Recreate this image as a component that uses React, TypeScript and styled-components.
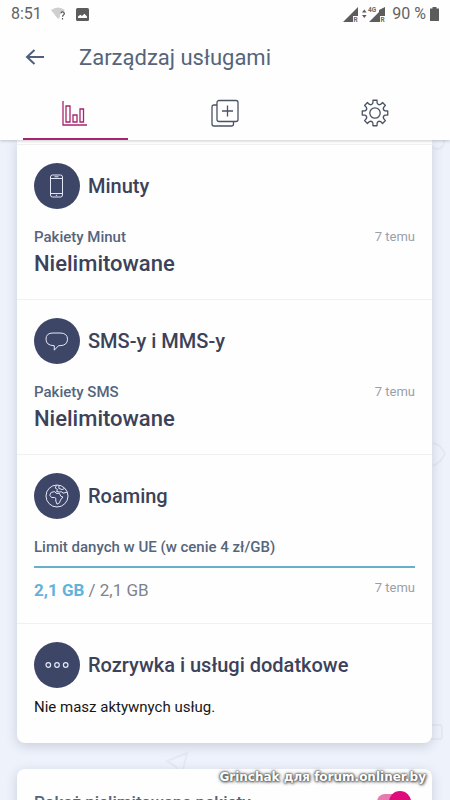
import React from "react";
import styled, { createGlobalStyle } from "styled-components";

const ink = "#3c4259";
const slate = "#55657b";
const magenta = "#a8246f";
const line = "#f0f0f2";

const GlobalStyle = createGlobalStyle`
  * { box-sizing: border-box; }
  body {
    margin: 0;
    font-family: Roboto, "Noto Sans", sans-serif;
    background: #eef2fb;
    color: ${ink};
  }
  button { font: inherit; border: 0; background: none; padding: 0; cursor: pointer; }
  h1, h2, p { margin: 0; }
  svg { display: block; }
`;

const Screen = styled.div`
  position: relative;
  height: 100vh;
  display: flex;
  flex-direction: column;
  overflow: hidden;
`;

const Header = styled.header`
  position: relative;
  z-index: 1;
  flex: none;
  background: #fefefe;
  box-shadow: 0 1px 3px rgba(0, 0, 0, 0.2);
`;

const StatusBar = styled.div`
  display: flex;
  align-items: center;
  justify-content: space-between;
  height: 28px;
  padding: 0 11px;
  font-size: 16px;
  line-height: 28px;
  color: #636363;
`;

const StatusGroup = styled.div<{ $gap: number }>`
  display: flex;
  align-items: center;
  gap: ${({ $gap }) => $gap}px;
`;

const Signals = styled.svg`
  margin-right: 2px;
`;

const AppBar = styled.div`
  display: flex;
  align-items: center;
  gap: 32px;
  height: 60px;
  padding: 0 23px;
`;

const BackButton = styled.button`
  display: grid;
  place-items: center;
  width: 24px;
  height: 24px;
`;

const PageTitle = styled.h1`
  font-size: 22px;
  line-height: 28px;
  font-weight: 400;
  color: ${slate};
`;

const Tabs = styled.nav`
  display: grid;
  grid-template-columns: repeat(3, 1fr);
  height: 52px;
`;

const Tab = styled.button<{ $active?: boolean }>`
  display: flex;
  flex-direction: column;
  align-items: center;
  justify-content: space-between;
  padding-top: 11px;
  color: ${({ $active }) => ($active ? magenta : "#4b5263")};

  &::after {
    content: "";
    width: 70%;
    height: 2px;
    background: ${({ $active }) => ($active ? magenta : "transparent")};
  }
`;

const Content = styled.main`
  position: relative;
  flex: 1;
  min-height: 0;
  overflow: hidden;
  display: flex;
  flex-direction: column;
  gap: 26px;
  padding: 0 18px 0 17px;
`;

const Backdrop = styled.svg`
  position: absolute;
  inset: 0;
  width: 100%;
  height: 100%;
`;

const Card = styled.section<{ $continued?: boolean }>`
  position: relative;
  flex: none;
  background: #fefefe;
  border-radius: ${({ $continued }) => ($continued ? "0 0 8px 8px" : "8px")};
  box-shadow: 0 3px 12px rgba(50, 60, 90, 0.2);
  padding-top: ${({ $continued }) => ($continued ? 4 : 0)}px;
`;

const Service = styled.article`
  padding: 18px 17px 21px;
  border-top: 1px solid ${line};
`;

const ServiceHead = styled.div`
  display: flex;
  align-items: center;
  gap: 8px;
`;

const Badge = styled.span`
  display: grid;
  place-items: center;
  flex: none;
  width: 46px;
  height: 46px;
  border-radius: 50%;
  background: #3e4668;
  color: #e3e8f8;
`;

const ServiceTitle = styled.h2`
  font-size: 20px;
  line-height: 24px;
  font-weight: 500;
  color: ${ink};
`;

const Row = styled.div<{ $top: number }>`
  display: flex;
  align-items: center;
  justify-content: space-between;
  margin-top: ${({ $top }) => $top}px;
`;

const Label = styled.p`
  font-size: 15px;
  line-height: 20px;
  font-weight: 500;
  color: ${slate};
`;

const Age = styled.span`
  font-size: 13px;
  line-height: 20px;
  color: #9aa0ab;
`;

const Value = styled.p`
  margin-top: 3px;
  font-size: 22px;
  line-height: 28px;
  font-weight: 500;
`;

const Meter = styled.div`
  height: 2px;
  margin-top: 9px;
  background: #68aecd;
`;

const Usage = styled.p`
  padding-top: 4px;
  font-size: 17px;
  line-height: 24px;
  color: #7d838e;

  strong { font-weight: 700; color: #62b2da; }
`;

const Note = styled.p`
  margin-top: 9px;
  padding-bottom: 5px;
  font-size: 15px;
  line-height: 20px;
  color: #161616;
`;

const SwitchRow = styled.label`
  display: flex;
  align-items: center;
  justify-content: space-between;
  padding: 23px 17px;
  font-size: 17px;
  line-height: 20px;
  font-weight: 500;
  color: ${slate};
`;

const Switch = styled.input`
  appearance: none;
  position: relative;
  width: 34px;
  height: 16px;
  margin: 0 4px 0 0;
  border-radius: 8px;
  background: #e67bb0;

  &::after {
    content: "";
    position: absolute;
    right: 0;
    top: -3px;
    width: 22px;
    height: 22px;
    border-radius: 50%;
    background: #df0b7b;
  }
`;

const Watermark = styled.div`
  position: absolute;
  z-index: 2;
  right: 24px;
  bottom: 15px;
  font: 700 12px/16px "DejaVu Sans", sans-serif;
  color: #fff;
  text-shadow: 0 0 2px #555, 0 0 2px #555, 1px 1px 3px #666, 0 0 4px #888;
`;

const WifiIcon = () => (
  <svg width="16" height="14" viewBox="0 0 16 14" aria-hidden="true">
    <path d="M0 3Q7 -2 14 3L12 5H9V10L7 12Z" fill="#cfcfcf" />
    <path d="M9.8 6.5Q9.8 4.8 11.5 4.8T13.3 6.4Q13.3 7.4 12.2 8.2Q11.5 8.8 11.5 9.8M11.5 11v1.4" fill="none" stroke="#555" strokeWidth="1.2" />
  </svg>
);

const PictureIcon = () => (
  <svg width="13" height="13" viewBox="0 0 13 13" aria-hidden="true">
    <rect width="13" height="13" rx="1.5" fill="#5c5c5c" />
    <path d="M2 10V8.5L4.3 6.8 6 8 8.4 5.8 11 8.5V10Z" fill="#fff" />
  </svg>
);

const SignalIcons = () => (
  <Signals width="43" height="18" viewBox="0 0 43 18" aria-hidden="true">
    <path d="M0 17 15 2V11H10V17ZM26 17 36 7V5L42 2V11H37V17Z" fill="#5c5c5c" />
    <path d="M19 7.5 21.3 4.5 23.6 7.5ZM19 10 21.3 13 23.6 10Z" fill="#5c5c5c" />
    <text x="10.5" y="17" fontSize="6.5" fontWeight="700" fill="#6a6a6a">R</text>
    <text x="37.5" y="17" fontSize="6.5" fontWeight="700" fill="#6a6a6a">R</text>
    <text x="25" y="7" fontSize="6.5" fontWeight="700" fill="#6a6a6a">4G</text>
  </Signals>
);

const BatteryIcon = () => (
  <svg width="9" height="14" viewBox="0 0 9 14" aria-hidden="true">
    <path d="M2.5 0h4v1.4H9V14H0V1.4h2.5Z" fill="#5c5c5c" />
  </svg>
);

const BackIcon = () => (
  <svg width="20" height="18" viewBox="0 0 20 18" fill="none" stroke="#4d617c" strokeWidth="2" aria-hidden="true">
    <path d="M19 8H2.5M9.5 1 2 8l7.5 7" />
  </svg>
);

const ChartIcon = () => (
  <svg width="26" height="27" viewBox="0 0 26 27" fill="none" stroke="currentColor" strokeWidth="1.3" aria-hidden="true">
    <path d="M1 2V26H25M4 7H8V23H4ZM11 16H15V23H11ZM18 10H21.5V23H18Z" />
  </svg>
);

const AddIcon = () => (
  <svg width="28" height="28" viewBox="0 0 28 28" fill="none" stroke="currentColor" strokeWidth="1.3" aria-hidden="true">
    <rect x="6" y="1.5" width="21" height="21" rx="2" />
    <path d="M6 6H3Q1 6 1 8V25Q1 27 3 27H20.5Q22.5 27 22.5 25V23M16.5 6.5V17.5M11 12H22" />
  </svg>
);

const teeth = Array.from({ length: 8 }, (_, i) => {
  const at = (radius: number, degrees: number) => {
    const angle = ((i * 45 - 90 + degrees) * Math.PI) / 180;
    return `${(14 + radius * Math.cos(angle)).toFixed(2)} ${(14 + radius * Math.sin(angle)).toFixed(2)}`;
  };
  return `${at(10.2, -12)}L${at(12.9, -9)}L${at(12.9, 9)}L${at(10.2, 12)}Q${at(8.2, 22.5)} ${at(10.2, 33)}`;
}).join("L");

const GearIcon = () => (
  <svg width="28" height="28" viewBox="0 0 28 28" fill="none" stroke="currentColor" strokeWidth="1.3" strokeLinejoin="round" aria-hidden="true">
    <path d={`M${teeth}Z`} />
    <circle cx="14" cy="14" r="5.2" />
  </svg>
);

const PhoneIcon = () => (
  <svg width="24" height="24" viewBox="0 0 24 24" fill="none" stroke="currentColor" aria-hidden="true">
    <rect x="5.5" y="1" width="12" height="22" rx="2" />
    <path d="M5.5 4.5H17.5M5.5 19.5H17.5M9.5 2.8H13.5M10.8 21.3H12.2" />
  </svg>
);

const SpeechIcon = () => (
  <svg width="24" height="24" viewBox="0 0 24 24" fill="none" stroke="currentColor" strokeLinejoin="round" aria-hidden="true">
    <path d="M8 4H15Q22.5 4 22.5 10.2T15 16.7H13.5L9.3 21.2V16.7Q1 16.5 1 10.2T8 4Z" />
  </svg>
);

const GlobeIcon = () => (
  <svg width="24" height="24" viewBox="0 0 24 24" fill="none" stroke="currentColor" strokeLinejoin="round" aria-hidden="true">
    <circle cx="12" cy="12" r="11" />
    <path d="M6.3 8.3 9.7 7.6 11 9.2 14.5 9.5 16 12.5 18 13 15.5 16 14.5 18.8 12 20.2 10.8 17V14.2L9.5 13.5H6.5L4.7 11.2ZM11.5 1.3 10.2 4 12.5 5.5 11.6 7.5 14.3 8 16.8 7.8 18 9.2 22 8.2M14 1.5 13.8 4.4 17 5.5 19.5 4.6" />
  </svg>
);

const DotsIcon = () => (
  <svg width="24" height="24" viewBox="0 0 24 24" fill="none" stroke="currentColor" strokeWidth="1.2" aria-hidden="true">
    <circle cx="3.3" cy="12" r="2.3" />
    <circle cx="12" cy="12" r="2.3" />
    <circle cx="20.7" cy="12" r="2.3" />
  </svg>
);

type ServiceProps = { icon: React.ReactNode; title: string; children: React.ReactNode };

const ServiceBlock = ({ icon, title, children }: ServiceProps) => (
  <Service>
    <ServiceHead>
      <Badge>{icon}</Badge>
      <ServiceTitle>{title}</ServiceTitle>
    </ServiceHead>
    {children}
  </Service>
);

const Unlimited = ({ label }: { label: string }) => (
  <>
    <Row $top={18}>
      <Label>{label}</Label>
      <Age>7 temu</Age>
    </Row>
    <Value>Nielimitowane</Value>
  </>
);

export default function App() {
  return (
    <Screen>
      <GlobalStyle />
      <Header>
        <StatusBar>
          <StatusGroup $gap={9}>
            <span>8:51</span>
            <WifiIcon />
            <PictureIcon />
          </StatusGroup>
          <StatusGroup $gap={4}>
            <SignalIcons />
            <span>90 %</span>
            <BatteryIcon />
          </StatusGroup>
        </StatusBar>
        <AppBar>
          <BackButton aria-label="Wstecz"><BackIcon /></BackButton>
          <PageTitle>Zarządzaj usługami</PageTitle>
        </AppBar>
        <Tabs>
          <Tab $active aria-label="Zużycie"><ChartIcon /></Tab>
          <Tab aria-label="Dodaj"><AddIcon /></Tab>
          <Tab aria-label="Ustawienia"><GearIcon /></Tab>
        </Tabs>
      </Header>
      <Content>
        <Backdrop fill="none" stroke="#e5e9f2" strokeWidth="2" aria-hidden="true">
          <path d="M167 621 187 613 182 634 176 627ZM433 303Q441 304 445 314 441 322 433 326" />
          <rect x="420" y="585" width="22" height="14" rx="3" />
          <circle cx="437" cy="2" r="7" />
        </Backdrop>
        <Card $continued>
          <ServiceBlock icon={<PhoneIcon />} title="Minuty">
            <Unlimited label="Pakiety Minut" />
          </ServiceBlock>
          <ServiceBlock icon={<SpeechIcon />} title="SMS-y i MMS-y">
            <Unlimited label="Pakiety SMS" />
          </ServiceBlock>
          <ServiceBlock icon={<GlobeIcon />} title="Roaming">
            <Row $top={18}>
              <Label>Limit danych w UE (w cenie 4 zł/GB)</Label>
            </Row>
            <Meter />
            <Row $top={6}>
              <Usage><strong>2,1 GB</strong> / 2,1 GB</Usage>
              <Age>7 temu</Age>
            </Row>
          </ServiceBlock>
          <ServiceBlock icon={<DotsIcon />} title="Rozrywka i usługi dodatkowe">
            <Note>Nie masz aktywnych usług.</Note>
          </ServiceBlock>
        </Card>
        <Card>
          <SwitchRow>
            Pokaż nielimitowane pakiety
            <Switch type="checkbox" role="switch" defaultChecked />
          </SwitchRow>
        </Card>
      </Content>
      <Watermark>Grinchak для forum.onliner.by</Watermark>
    </Screen>
  );
}
